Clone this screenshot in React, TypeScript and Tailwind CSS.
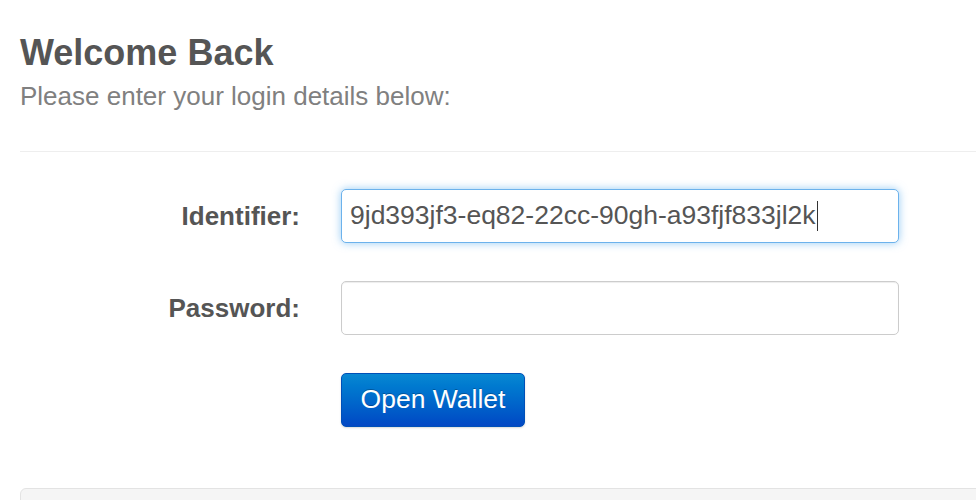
export default function App() {
  return (
    <div
      className="h-[500px] overflow-hidden bg-white pl-5 pt-[33px]"
      style={{ fontFamily: '"Liberation Sans", Arial, sans-serif' }}
    >
      {/* Header */}
      <h2 className="text-[36px] font-bold leading-[40px] text-[#555]">
        Welcome Back
      </h2>
      <p className="mt-2 text-[26px] leading-[30px] text-[#808080]">
        Please enter your login details below:
      </p>

      <hr className="-mr-5 mt-10 border-0 border-t border-[#eeeeee]" />

      {/* Form */}
      <form className="mt-[37px] flex flex-col gap-[38px]">
        <div className="flex items-center gap-[41px]">
          <label className="w-[280px] text-right text-[26px] font-bold text-[#555]">
            Identifier:
          </label>
          <div className="flex h-[54px] w-[558px] items-center rounded-[5px] border border-[#6cb2ec] bg-white px-2 text-[26.5px] text-[#555] shadow-[0_0_8px_rgba(82,168,236,0.6)]">
            <span>9jd393jf3-eq82-22cc-90gh-a93fjf833jl2k</span>
            <span className="ml-px inline-block h-[30px] w-px bg-[#333]"></span>
          </div>
        </div>

        <div className="flex items-center gap-[41px]">
          <label className="w-[280px] text-right text-[26px] font-bold text-[#555]">
            Password:
          </label>
          <input
            type="password"
            className="h-[54px] w-[558px] rounded-[5px] border border-[#cccccc] bg-white px-2 text-[26px] text-[#555] shadow-[inset_0_1px_1px_rgba(0,0,0,0.075)] outline-none"
          />
        </div>

        <div className="flex gap-[41px]">
          <div className="w-[280px]"></div>
          <button
            type="button"
            className="h-[54px] w-[184px] rounded-[5px] border border-[#0050b8] bg-linear-to-b from-[#0a88d2] to-[#0447c4] text-[26.5px] text-white shadow-[0_1px_2px_rgba(0,0,0,0.15)] [text-shadow:0_-1px_0_rgba(0,0,0,0.25)]"
          >
            Open Wallet
          </button>
        </div>
      </form>

      {/* Footer well */}
      <div className="-mr-5 mt-[61px] h-10 rounded-tl-[6px] border border-[#e3e3e3] bg-[#f5f5f5]"></div>
    </div>
  )
}
